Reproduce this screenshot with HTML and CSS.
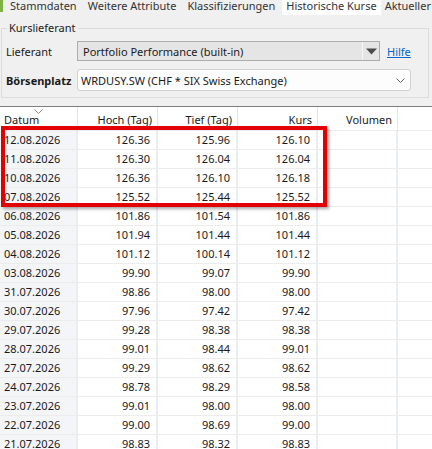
FILE: index.html
```html
<!DOCTYPE html>
<html>
<head>
<meta charset="utf-8">
<link rel="stylesheet" href="styles.css">
</head>
<body>
<div class="tabs">
  <span class="tab-icon"></span>
  <div class="tab">Stammdaten</div>
  <div class="tab">Weitere Attribute</div>
  <div class="tab">Klassifizierungen</div>
  <div class="tab active">Historische Kurse</div>
  <div class="tab">Aktueller</div>
</div>
<div class="panel">
  <fieldset class="group">
    <legend>Kurslieferant</legend>
    <div class="form-row">
      <label class="lbl">Lieferant</label>
      <div class="combo combo-ro">
        <span class="combo-text">Portfolio Performance (built-in)</span>
        <span class="combo-btn"><svg width="11" height="7" viewBox="0 0 11 7"><polygon points="0,0.5 11,0.5 5.5,6.5" fill="#4b4b4b"/></svg></span>
      </div>
      <a class="link" href="#">Hilfe</a>
    </div>
    <div class="form-row row2">
      <label class="lbl bold">Börsenplatz</label>
      <div class="combo combo-edit">
        <span class="combo-text">WRDUSY.SW (CHF * SIX Swiss Exchange)</span>
        <svg class="chev" width="9" height="5" viewBox="0 0 9 5"><polyline points="0.5,0.5 4.5,4.5 8.5,0.5" fill="none" stroke="#606060" stroke-width="1"/></svg>
      </div>
    </div>
  </fieldset>
</div>
<div class="table">
  <div class="thead">
    <div class="th first">Datum<svg class="sort" width="9" height="5" viewBox="0 0 9 5"><polyline points="0.5,0.5 4.5,4.5 8.5,0.5" fill="none" stroke="#8a8a8a" stroke-width="1"/></svg></div>
    <div class="th">Hoch (Tag)</div>
    <div class="th">Tief (Tag)</div>
    <div class="th">Kurs</div>
    <div class="th">Volumen</div>
    <div class="th last"></div>
  </div>
  <div class="tbody">
    <div class="tr"><div class="td first">12.08.2026</div><div class="td">126.36</div><div class="td">125.96</div><div class="td">126.10</div><div class="td"></div><div class="td last"></div></div>
    <div class="tr"><div class="td first">11.08.2026</div><div class="td">126.30</div><div class="td">126.04</div><div class="td">126.04</div><div class="td"></div><div class="td last"></div></div>
    <div class="tr"><div class="td first">10.08.2026</div><div class="td">126.36</div><div class="td">126.10</div><div class="td">126.18</div><div class="td"></div><div class="td last"></div></div>
    <div class="tr"><div class="td first">07.08.2026</div><div class="td">125.52</div><div class="td">125.44</div><div class="td">125.52</div><div class="td"></div><div class="td last"></div></div>
    <div class="tr"><div class="td first">06.08.2026</div><div class="td">101.86</div><div class="td">101.54</div><div class="td">101.86</div><div class="td"></div><div class="td last"></div></div>
    <div class="tr"><div class="td first">05.08.2026</div><div class="td">101.94</div><div class="td">101.44</div><div class="td">101.44</div><div class="td"></div><div class="td last"></div></div>
    <div class="tr"><div class="td first">04.08.2026</div><div class="td">101.12</div><div class="td">100.14</div><div class="td">101.12</div><div class="td"></div><div class="td last"></div></div>
    <div class="tr"><div class="td first">03.08.2026</div><div class="td">99.90</div><div class="td">99.07</div><div class="td">99.90</div><div class="td"></div><div class="td last"></div></div>
    <div class="tr"><div class="td first">31.07.2026</div><div class="td">98.86</div><div class="td">98.00</div><div class="td">98.00</div><div class="td"></div><div class="td last"></div></div>
    <div class="tr"><div class="td first">30.07.2026</div><div class="td">97.96</div><div class="td">97.42</div><div class="td">97.42</div><div class="td"></div><div class="td last"></div></div>
    <div class="tr"><div class="td first">29.07.2026</div><div class="td">99.28</div><div class="td">98.38</div><div class="td">98.38</div><div class="td"></div><div class="td last"></div></div>
    <div class="tr"><div class="td first">28.07.2026</div><div class="td">99.01</div><div class="td">98.44</div><div class="td">99.01</div><div class="td"></div><div class="td last"></div></div>
    <div class="tr"><div class="td first">27.07.2026</div><div class="td">99.29</div><div class="td">98.62</div><div class="td">98.62</div><div class="td"></div><div class="td last"></div></div>
    <div class="tr"><div class="td first">24.07.2026</div><div class="td">98.78</div><div class="td">98.29</div><div class="td">98.58</div><div class="td"></div><div class="td last"></div></div>
    <div class="tr"><div class="td first">23.07.2026</div><div class="td">99.01</div><div class="td">98.00</div><div class="td">98.00</div><div class="td"></div><div class="td last"></div></div>
    <div class="tr"><div class="td first">22.07.2026</div><div class="td">99.00</div><div class="td">98.69</div><div class="td">99.00</div><div class="td"></div><div class="td last"></div></div>
    <div class="tr"><div class="td first">21.07.2026</div><div class="td">98.83</div><div class="td">98.32</div><div class="td">98.83</div><div class="td"></div><div class="td last"></div></div>
  </div>
</div>
<div class="highlight"></div>
</body>
</html>
```
FILE: styles.css
```css
html, body {
  margin: 0;
  padding: 0;
}
body {
  width: 432px;
  height: 449px;
  overflow: hidden;
  position: relative;
  background: #ffffff;
  font-family: "Noto Sans", "Liberation Sans", sans-serif;
  font-size: 11px;
  color: #1a1a1a;
}
.tabs {
  height: 15px;
  background: #f0f0f0;
  display: flex;
  align-items: flex-start;
  position: relative;
}
.tab-icon {
  position: absolute;
  left: 0;
  top: 0;
  width: 3px;
  height: 12px;
  background: #7cb342;
}
.tab {
  height: 15px;
  line-height: 11px;
  padding: 0 4px;
  color: #333333;
  white-space: nowrap;
}
.tab:nth-child(2) { margin-left: 6px; }
.tab:nth-child(3) { margin-left: 3px; }
.tab:nth-child(4) { margin-left: 3px; }
.tab.active {
  background: #ffffff;
  margin-left: 3px;
}
.tab:nth-child(6) { margin-left: 0; }
.panel {
  background: #f0f0f0;
  height: 91px;
  box-sizing: border-box;
  padding: 6px 3px 0 1px;
}
.group {
  margin: 0;
  border: 1px solid #dcdcdc;
  padding: 6px 0 6px 4px;
  min-width: 0;
}
.group legend {
  padding: 0 2px;
  margin-left: 1px;
  line-height: 14px;
  color: #1a1a1a;
}
.form-row {
  display: flex;
  align-items: center;
  height: 20px;
}
.form-row.row2 {
  margin-top: 8px;
  height: 22px;
}
.lbl {
  width: 71px;
  flex: none;
}
.bold { font-weight: bold; }
.combo {
  box-sizing: border-box;
  display: flex;
  align-items: center;
  flex: none;
}
.combo-ro {
  width: 303px;
  height: 20px;
  background: #e5e5e5;
  border: 1px solid #adadad;
}
.combo-edit {
  width: 334px;
  height: 22px;
  background: #fdfdfd;
  border: 1px solid #d0d0d0;
  border-radius: 3px;
}
.combo-text {
  flex: 1;
  padding-left: 5px;
  white-space: nowrap;
}
.combo-edit .combo-text { padding-left: 3px; }
.combo-btn {
  width: 16px;
  height: 18px;
  border-left: 1px solid #f7f7f7;
  display: flex;
  align-items: center;
  justify-content: center;
}
.chev {
  margin-right: 5px;
}
.link {
  margin-left: 7px;
  color: #0066cc;
  text-decoration: underline;
}
.table {
  border-top: 1px solid #7d7d7d;
}
.thead, .tr {
  display: grid;
  grid-template-columns: 78px 80px 80px 80px 80px 1fr;
}
.thead {
  height: 24px;
  border-bottom: 1px solid #ececec;
  box-sizing: border-box;
}
.th {
  position: relative;
  border-right: 1px solid #e3e3e3;
  text-align: right;
  padding-right: 5px;
  line-height: 25px;
  white-space: nowrap;
}
.th.first {
  text-align: left;
  padding-left: 4px;
}
.th.last { border-right: none; }
.sort {
  position: absolute;
  left: 34px;
  top: 2px;
}
.tr {
  height: 19px;
  border-bottom: 1px solid #ececec;
  box-sizing: border-box;
}
.td {
  border-right: 2px solid #e9edf4;
  text-align: right;
  padding-right: 6px;
  line-height: 18px;
  white-space: nowrap;
}
.td.first {
  text-align: left;
  padding-left: 4px;
  background: #f4f5f7;
}
.td.last { border-right: none; }
.highlight {
  position: absolute;
  left: 1px;
  top: 126px;
  width: 326px;
  height: 81px;
  box-sizing: border-box;
  border: 4px solid #e30000;
  box-shadow: 2px 2px 3px rgba(0, 0, 0, 0.35);
}
```
